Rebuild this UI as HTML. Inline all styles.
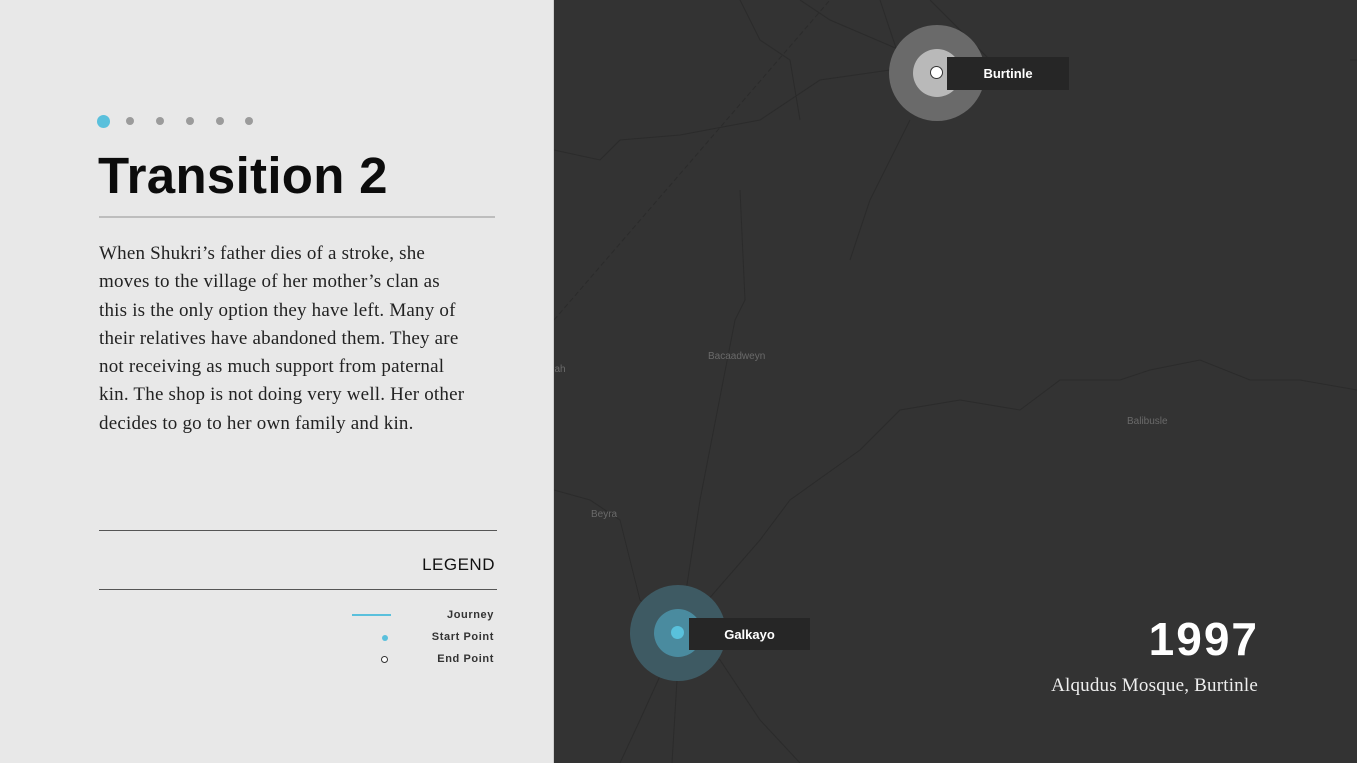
<!DOCTYPE html>
<html><head><meta charset="utf-8"><style>
*{margin:0;padding:0;box-sizing:border-box}
body{width:1357px;height:763px;overflow:hidden;position:relative;background:#333;font-family:"Liberation Sans",sans-serif}
#left{position:absolute;left:0;top:0;width:554px;height:763px;background:#e8e8e8;border-right:1px solid #cfcfcf}
.dot{position:absolute;top:117px;width:8px;height:8px;border-radius:50%;background:#9b9b9b}
h1{position:absolute;left:98px;top:146px;font-size:51px;font-weight:bold;color:#0c0c0c;letter-spacing:0.3px;white-space:nowrap}
.rule{position:absolute;left:99px;height:2px}
p.body{position:absolute;left:99px;top:240px;width:372px;font-family:"Liberation Serif",serif;font-size:19px;line-height:28.3px;color:#222;letter-spacing:0.2px}
.lg{position:absolute;right:59px;font-size:11px;font-weight:bold;color:#333;letter-spacing:.6px;text-align:right}
.lab{position:absolute;background:#262626;color:#fff;font-weight:bold;font-size:13px;display:flex;align-items:center;justify-content:center}
.mt{position:absolute;font-size:10px;color:#6a6a6a}
</style></head><body>
<svg width="1357" height="763" style="position:absolute;left:0;top:0">
<g stroke="#2b2b2b" stroke-width="1" fill="none">
<path d="M554 320 L830 0" stroke-dasharray="5 3"/>
<path d="M880 0 L900 60 M800 0 L830 20 L900 50 M930 0 L990 60 M1350 60 L1357 60"/>
<path d="M554 150 L600 160 L620 140 L680 135 L760 120 L820 80 L890 70 L940 72"/>
<path d="M740 190 L745 300 L735 320 L700 500 L680 630 L672 763"/>
<path d="M554 490 L590 500 L620 520 L640 600 L680 632 L720 660 L760 720 L800 763"/>
<path d="M680 632 L760 540 L790 500 L860 450 L900 410 L960 400 L1020 410 L1060 380 L1120 380 L1150 370 L1200 360 L1250 380 L1300 380 L1357 390"/>
<path d="M680 632 L640 720 L620 763 M910 120 L870 200 L850 260"/>
<path d="M740 0 L760 40 L790 60 L800 120"/>
</g></svg>
<div class="mt" style="left:708px;top:351px">Bacaadweyn</div>
<div class="mt" style="left:540px;top:364px">Salah</div>
<div class="mt" style="left:1127px;top:416px">Balibusle</div>
<div class="mt" style="left:591px;top:509px">Beyra</div>
<div style="position:absolute;left:889px;top:25px;width:96px;height:96px;border-radius:50%;background:#6a6a6a"></div>
<div style="position:absolute;left:913px;top:49px;width:48px;height:48px;border-radius:50%;background:#b9b9b9"></div>
<div style="position:absolute;left:930px;top:66px;width:13px;height:13px;border-radius:50%;background:#fff;border:1.5px solid #333"></div>
<div class="lab" style="left:947px;top:57px;width:122px;height:33px">Burtinle</div>
<div style="position:absolute;left:630px;top:585px;width:96px;height:96px;border-radius:50%;background:#3e5a63"></div>
<div style="position:absolute;left:654px;top:609px;width:48px;height:48px;border-radius:50%;background:#4a8b9f"></div>
<div style="position:absolute;left:671px;top:626px;width:13px;height:13px;border-radius:50%;background:#59c1dc"></div>
<div class="lab" style="left:689px;top:618px;width:121px;height:32px">Galkayo</div>
<div style="position:absolute;right:98px;top:612px;font-size:46px;font-weight:bold;color:#fff;letter-spacing:2px">1997</div>
<div style="position:absolute;right:99px;top:675px;font-family:'Liberation Serif',serif;font-size:19px;color:#eee;letter-spacing:0.2px">Alqudus Mosque, Burtinle</div>

<div id="left">
<div class="dot" style="left:97px;top:115px;width:13px;height:13px;background:#5ac0dc"></div>
<div class="dot" style="left:126px"></div>
<div class="dot" style="left:156px"></div>
<div class="dot" style="left:186px"></div>
<div class="dot" style="left:216px"></div>
<div class="dot" style="left:245px"></div>
<h1>Transition 2</h1>
<div class="rule" style="top:216px;width:396px;background:#bdbdbd"></div>
<p class="body">When Shukri’s father dies of a stroke, she moves to the village of her mother’s clan as this is the only option they have left. Many of their relatives have abandoned them. They are not receiving as much support from paternal kin. The shop is not doing very well. Her other decides to go to her own family and kin.</p>
<div class="rule" style="top:530px;width:398px;height:1px;background:#555"></div>
<div style="position:absolute;right:58px;top:555px;font-size:17px;color:#111;letter-spacing:.5px">LEGEND</div>
<div class="rule" style="top:589px;width:398px;height:1px;background:#555"></div>
<div style="position:absolute;left:352px;top:614px;width:39px;height:2px;background:#5ac0dc"></div>
<div class="lg" style="top:609px">Journey</div>
<div style="position:absolute;left:382px;top:635px;width:6px;height:6px;border-radius:50%;background:#5ac0dc"></div>
<div class="lg" style="top:631px">Start Point</div>
<div style="position:absolute;left:381px;top:656px;width:7px;height:7px;border-radius:50%;background:#fff;border:1px solid #333"></div>
<div class="lg" style="top:653px">End Point</div>
</div>
</body></html>
